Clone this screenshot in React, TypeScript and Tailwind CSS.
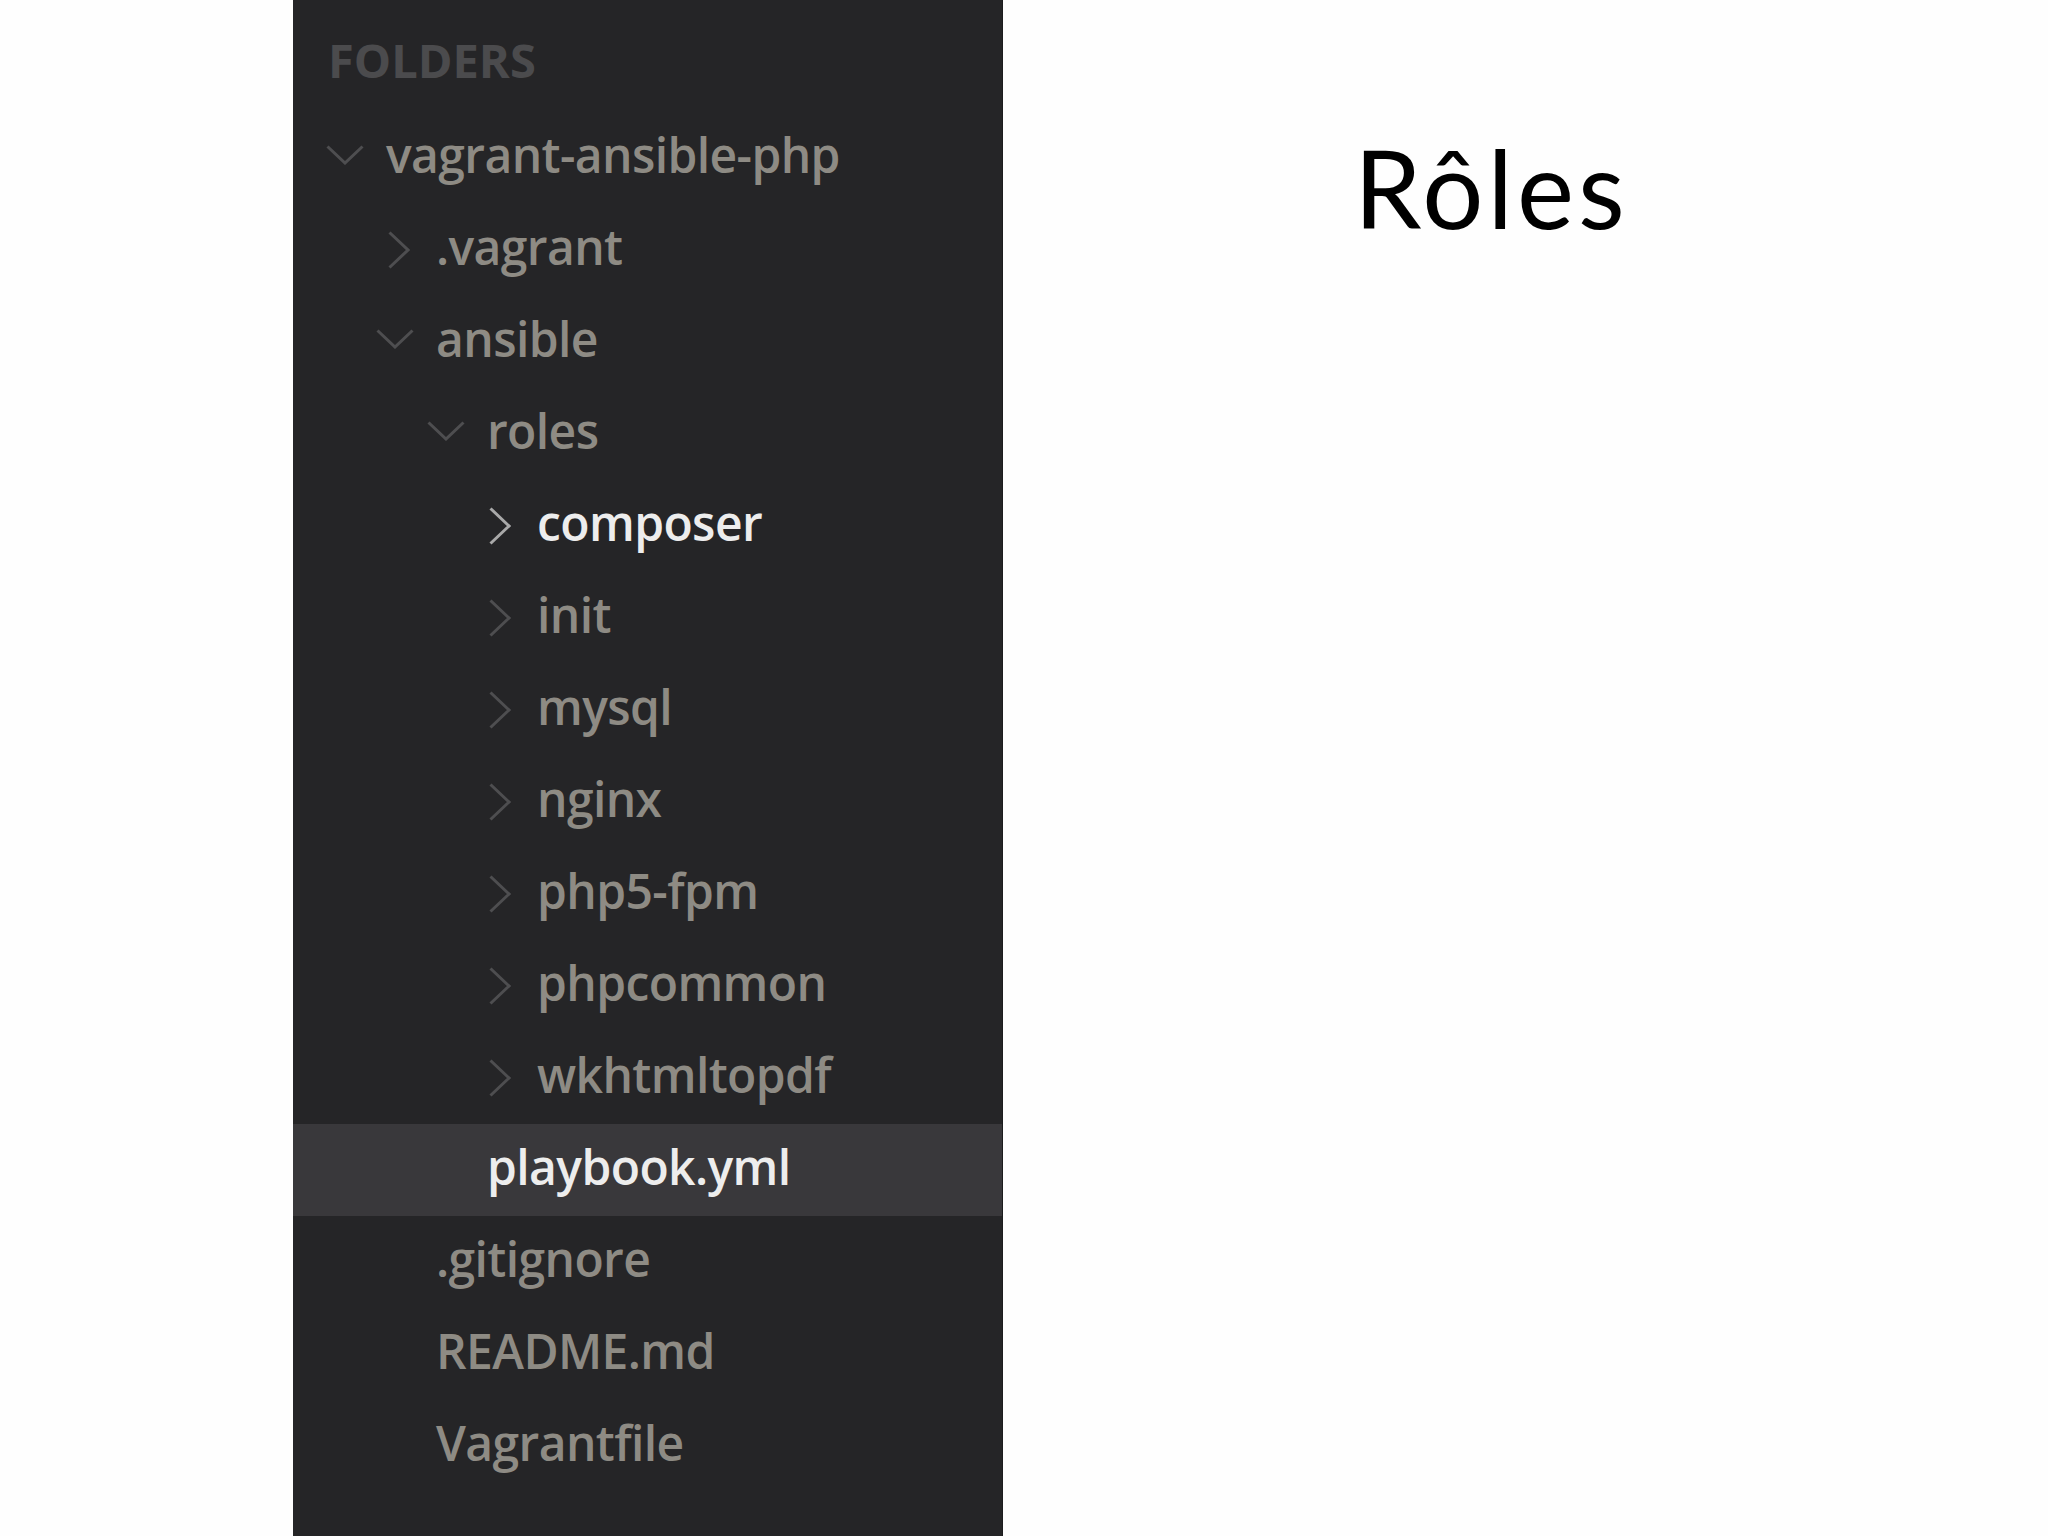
type Node = {
  name: string;
  level: number;
  kind: 'open' | 'closed' | 'file';
  bright?: boolean;
  selected?: boolean;
};

const tree: Node[] = [
  { name: 'vagrant-ansible-php', level: 0, kind: 'open' },
  { name: '.vagrant', level: 1, kind: 'closed' },
  { name: 'ansible', level: 1, kind: 'open' },
  { name: 'roles', level: 2, kind: 'open' },
  { name: 'composer', level: 3, kind: 'closed', bright: true },
  { name: 'init', level: 3, kind: 'closed' },
  { name: 'mysql', level: 3, kind: 'closed' },
  { name: 'nginx', level: 3, kind: 'closed' },
  { name: 'php5-fpm', level: 3, kind: 'closed' },
  { name: 'phpcommon', level: 3, kind: 'closed' },
  { name: 'wkhtmltopdf', level: 3, kind: 'closed' },
  { name: 'playbook.yml', level: 2, kind: 'file', selected: true },
  { name: '.gitignore', level: 1, kind: 'file' },
  { name: 'README.md', level: 1, kind: 'file' },
  { name: 'Vagrantfile', level: 1, kind: 'file' },
];

const indent = ['pl-[31px]', 'pl-[81px]', 'pl-[132px]', 'pl-[182px]'];

const Chevron = ({ kind, bright }: { kind: Node['kind']; bright?: boolean }) => {
  const stroke = bright ? '#a9a9a9' : '#4e4e50';
  if (kind === 'open') {
    return (
      <svg width="38" height="20" viewBox="0 0 38 20" className="mb-[6px]">
        <polyline points="1.5,1.5 19,18 36.5,1.5" fill="none" stroke={stroke} strokeWidth="3" />
      </svg>
    );
  }
  if (kind === 'closed') {
    return (
      <svg width="22" height="38" viewBox="0 0 22 38" className="mr-[4px]">
        <polyline points="1.5,1.5 20,19 1.5,36.5" fill="none" stroke={stroke} strokeWidth="3" />
      </svg>
    );
  }
  return null;
};

const Row = ({ node }: { node: Node }) => (
  <div
    className={`flex h-[92px] items-center ${indent[node.level]} ${
      node.selected ? 'bg-[#39383b]' : ''
    }`}
  >
    <span className="mr-[22px] flex w-[40px] justify-end">
      <Chevron kind={node.kind} bright={node.bright} />
    </span>
    <span
      className={`mb-[6px] whitespace-nowrap text-[48px] font-semibold leading-none tracking-[-0.6px] ${
        node.bright || node.selected ? 'text-[#ededed]' : 'text-[#8e8b84]'
      }`}
    >
      {node.name}
    </span>
  </div>
);

export default function App() {
  return (
    <div className="flex h-[1536px] w-[2048px] bg-[#fefefe] font-['Open_Sans',sans-serif]">
      <aside className="ml-[293px] h-full w-[710px] border-r border-[#1c1c1e] bg-[#252527]">
        <div className="h-[112px] pl-[35px] pt-[37px]">
          <h2 className="text-[47px] font-bold leading-none text-[#4b4b4d]">FOLDERS</h2>
        </div>
        <nav>
          {tree.map((node) => (
            <Row key={node.name} node={node} />
          ))}
        </nav>
      </aside>
      <main className="flex-1 pl-[351px] pt-[133px]">
        <h1 className="font-['Lato',sans-serif] text-[108px] font-normal leading-none tracking-[4px] text-black">
          Rôles
        </h1>
      </main>
    </div>
  );
}
